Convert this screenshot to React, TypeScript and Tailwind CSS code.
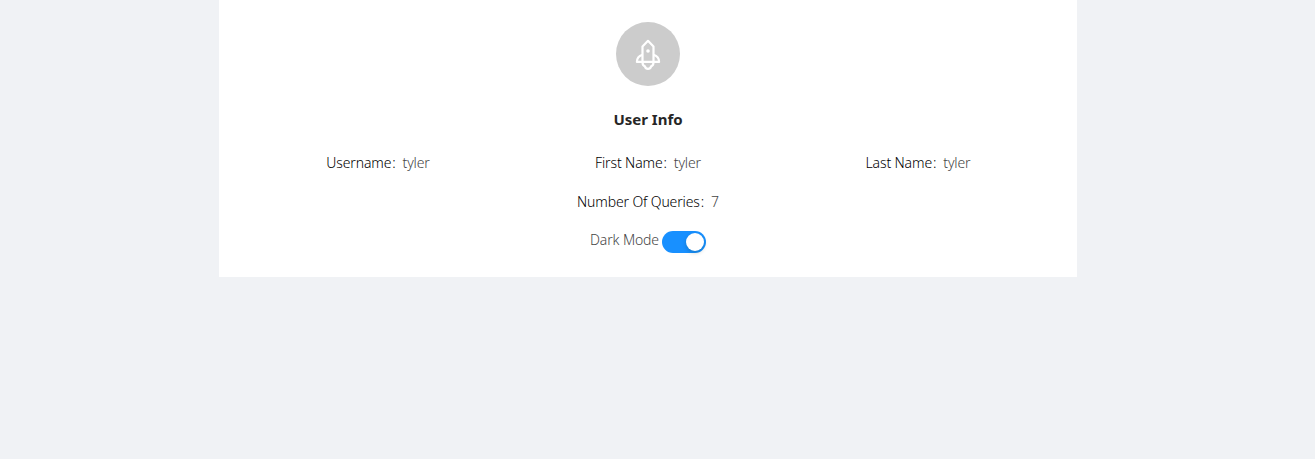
function Rocket() {
  return (
    <svg width="32" height="32" viewBox="0 0 32 32" fill="none" stroke="currentColor" strokeWidth="2.2" strokeLinejoin="round" aria-hidden="true">
      <path d="M10.5 23.9V8.4L16 2.8L21.5 8.4V23.9" />
      <path d="M10.5 16.8C7 18 4.9 20.6 4.9 23.9H27.1C27.1 20.6 25 18 21.5 16.8" />
      <path d="M10.6 24.2C10.4 26.4 11.2 27.8 12.9 28.4C13.4 30.1 14.4 30.9 16 30.9S18.6 30.1 19.1 28.4C20.8 27.8 21.6 26.4 21.4 24.2" />
      <circle cx="16" cy="13" r="1.8" fill="currentColor" stroke="none" />
    </svg>
  );
}

function Item({ label, value }: { label: string; value: string }) {
  return (
    <div className="flex justify-center leading-[22px]">
      <span className="text-black">{label}</span>
      <span className="ml-px text-black">:</span>
      <span className="ml-[7px] text-[#454545]">{value}</span>
    </div>
  );
}

export default function App() {
  return (
    <div className="min-h-screen bg-[#f0f2f5] pl-[219px] font-['Noto_Sans',sans-serif] text-[14px] font-light tracking-[-0.13px]">
      <main className="flex h-[277px] w-[858px] flex-col bg-white pt-[22px]">
        <div className="flex size-16 items-center justify-center self-center rounded-full bg-[#ccc] text-white">
          <Rocket />
        </div>
        <h1 className="mt-[20px] text-center text-[15px] font-bold leading-[26px] tracking-normal text-[#262626]">User Info</h1>
        <div className="mt-5 grid grid-cols-3 px-6">
          <Item label="Username" value="tyler" />
          <Item label="First Name" value="tyler" />
          <Item label="Last Name" value="tyler" />
        </div>
        <div className="mt-[17px]"><Item label="Number Of Queries" value="7" /></div>
        <div className="mt-[17px] flex items-start justify-center gap-[3px] text-[#454545]">
          <span className="leading-[20px]">Dark Mode</span>
          <button aria-label="Dark Mode" className="mt-px flex h-[22px] w-11 justify-end rounded-full bg-[#1890ff] p-0.5"><span className="size-[18px] rounded-full bg-white shadow-[0_2px_4px_rgba(0,35,11,0.2)]" /></button>
        </div>
      </main>
    </div>
  );
}
